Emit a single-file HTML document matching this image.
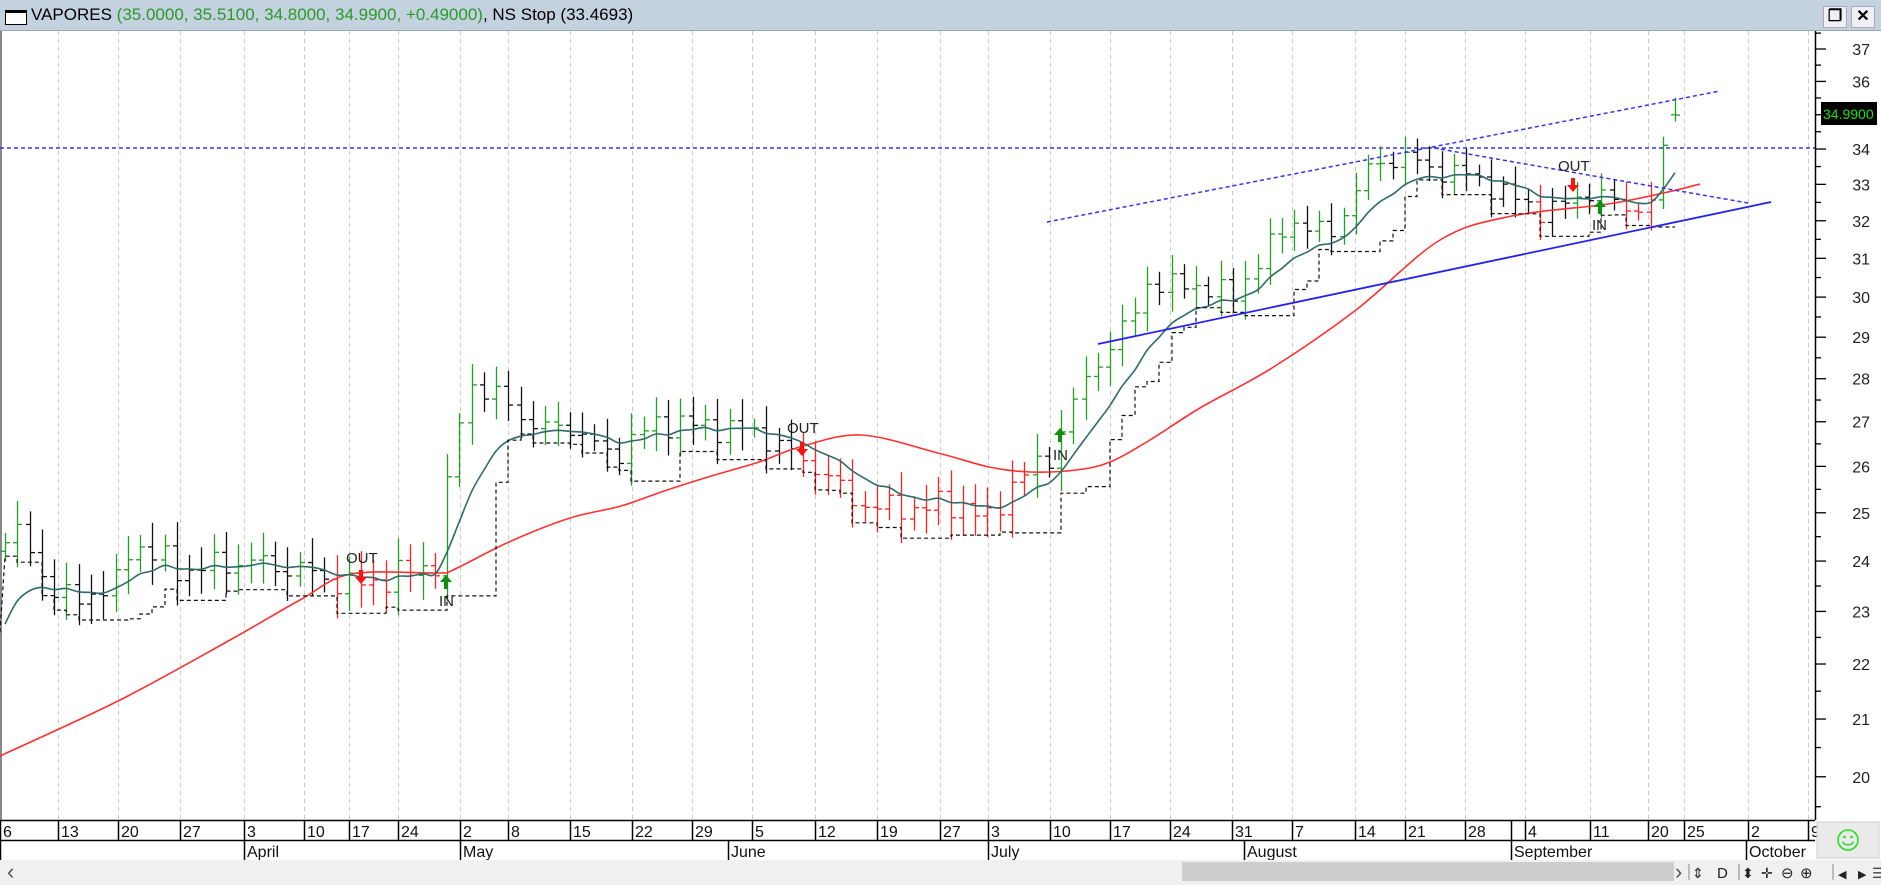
<!DOCTYPE html>
<html><head><meta charset="utf-8"><style>
html,body{margin:0;padding:0;width:1881px;height:885px;overflow:hidden;background:#fff;font-family:"Liberation Sans",sans-serif}
#title{position:absolute;left:0;top:0;width:1881px;height:31px;background:#c4d1de;border-bottom:1px solid #9aa7b4;box-sizing:border-box}
#title .t{position:absolute;left:31px;top:5px;font-size:17px;color:#000;white-space:nowrap}
#title .g{color:#2a9a2a}
#ico{position:absolute;left:5px;top:10px;width:22px;height:15px;border:1px solid #000;border-top:3px solid #000;box-sizing:border-box;background:#fff}
.btn{position:absolute;top:6px;width:24px;height:22px;background:#eef0f3;border:1px solid #aab;box-sizing:border-box;font-size:16px;text-align:center;line-height:20px;font-weight:bold}
svg{position:absolute;left:0;top:0}
</style></head><body>
<div id="title"><div id="ico"></div><div class="t">VAPORES <span class="g">(35.0000, 35.5100, 34.8000, 34.9900, +0.49000)</span>, NS Stop (33.4693)</div>
<div class="btn" style="left:1823px">&#x2750;</div><div class="btn" style="left:1851px">✕</div></div>
<svg id="s" width="1881" height="885" style="top:0"></svg>
<script>
var S=document.getElementById('s'),out='';
function Y(p){return 49+1183*(Math.log(37)-Math.log(p));}
function L(x1,y1,x2,y2,c,w,d){out+='<line x1="'+x1+'" y1="'+y1+'" x2="'+x2+'" y2="'+y2+'" stroke="'+c+'" stroke-width="'+(w||1)+'"'+(d?' stroke-dasharray="'+d+'"':'')+'/>';}
function T(x,y,t,c,s,a){out+='<text x="'+x+'" y="'+y+'" fill="'+(c||'#000')+'" font-size="'+(s||15)+'" font-family="Liberation Sans"'+(a?' text-anchor="'+a+'"':'')+'>'+t+'</text>';}
function cr(pts){var d='M'+pts[0][0]+','+pts[0][1];for(var i=0;i<pts.length-1;i++){var p0=pts[Math.max(0,i-1)],p1=pts[i],p2=pts[i+1],p3=pts[Math.min(pts.length-1,i+2)];d+=' C'+(p1[0]+(p2[0]-p0[0])/6).toFixed(1)+','+(p1[1]+(p2[1]-p0[1])/6).toFixed(1)+' '+(p2[0]-(p3[0]-p1[0])/6).toFixed(1)+','+(p2[1]-(p3[1]-p1[1])/6).toFixed(1)+' '+p2[0]+','+p2[1];}return d;}
out+='<rect x="0" y="31" width="1815" height="789" fill="#fff"/>';
L(1,31,1,820,'#888',2);
var ticks=[[0,'6'],[58,'13'],[118,'20'],[180,'27'],[244,'3'],[304,'10'],[349,'17'],[398,'24'],[460,'2'],[508,'8'],[570,'15'],[632,'22'],[692,'29'],[752,'5'],[815,'12'],[877,'19'],[940,'27'],[988,'3'],[1050,'10'],[1110,'17'],[1170,'24'],[1232,'31'],[1292,'7'],[1355,'14'],[1405,'21'],[1465,'28'],[1525,'4'],[1590,'11'],[1648,'20'],[1684,'25'],[1748,'2'],[1808,'9']];
ticks.forEach(function(t){if(t[0]>0)L(t[0]+.5,31,t[0]+.5,820,'#c8c8c8',1,'4,4');});
L(0,148,1815,148,'#3333ee',1.5,'4,3');
var kp=[[0,24.3],[20,24.6],[58,23.2],[118,23.5],[130,24.4],[180,23.8],[244,24.0],[304,23.8],[349,23.5],[398,23.7],[440,24.0],[452,26.5],[470,27.9],[508,27.4],[540,26.8],[570,26.9],[610,26.2],[632,26.6],[660,27.0],[700,26.9],[752,26.8],[790,26.3],[815,26.0],[850,25.3],[877,25.1],[920,25.1],[960,25.2],[988,24.8],[1010,25.6],[1050,26.2],[1070,27.3],[1100,28.5],[1135,29.6],[1145,30.4],[1160,30.3],[1200,30.3],[1232,30.0],[1260,31.0],[1292,32.0],[1330,31.6],[1370,33.5],[1405,33.8],[1430,33.4],[1465,33.3],[1500,32.8],[1545,32.2],[1590,32.8],[1630,32.3],[1655,32.5],[1665,34.3],[1676,34.99]];
function ip(x){for(var i=1;i<kp.length;i++)if(x<=kp[i][0]){var a=kp[i-1],b=kp[i];return a[1]+(b[1]-a[1])*(x-a[0])/(b[0]-a[0]);}return kp[kp.length-1][1];}
var rp=[[0,756],[120,700],[230,640],[300,600],[351,574],[438,573],[453,570],[509,542],[570,518],[621,506],[667,490],[708,477],[759,462],[800,447],[861,435],[938,453],[989,467],[1030,472],[1076,470],[1110,462],[1150,440],[1200,408],[1272,368],[1356,310],[1440,240],[1512,216],[1608,204],[1668,192],[1700,184]];
function rY(x){for(var i=1;i<rp.length;i++)if(x<=rp[i][0]){var a=rp[i-1],b=rp[i];return a[1]+(b[1]-a[1])*(x-a[0])/(b[0]-a[0]);}return 184;}
var bars=[],prev=24.2,ema=22.3,lows=[],stp=[],tl=[];
for(var i=0;i<=136;i++){var x=Math.round(5+i*12.28);var c=ip(x)+0.35*Math.sin(i*2.3)*Math.cos(i*0.7);var o=prev;var r=0.2+0.3*Math.abs(Math.sin(i*1.7));var h=Math.max(o,c)+r,l=Math.min(o,c)-r;if(i==136){o=35.0;c=34.99;h=35.51;l=34.8;}
bars.push([x,o,h,l,c]);prev=c;ema=ema+(c-ema)*0.22;tl.push([x,ema]);lows.push(l);var mn=Math.min.apply(null,lows.slice(-4));stp.push([x,mn+0.1]);}
bars.forEach(function(b,i){var x=b[0],col;var ry=rY(x);if(Y(b[4])>ry+2)col='#ff2020';else if(b[4]>tl[i][1]&&b[4]>=(i?bars[i-1][4]:0)-0.1)col='#22a022';else col='#111';
L(x+.5,Y(b[2]),x+.5,Y(b[3]),col,1.3);L(x-4,Y(b[1]),x+.5,Y(b[1]),col,1.3);L(x+.5,Y(b[4]),x+5,Y(b[4]),col,1.3);});
out+='<path d="'+cr(rp)+'" fill="none" stroke="#ff3030" stroke-width="1.6"/>';
out+='<path d="'+cr(tl.map(function(p){return [p[0],+Y(p[1]).toFixed(1)]}))+'" fill="none" stroke="#2f6b6b" stroke-width="1.6"/>';
var sd='M0,'+Y(22.6).toFixed(1);stp.forEach(function(p,i){var yy=Y(p[1]).toFixed(1);sd+=' L'+p[0]+','+(i?Y(stp[i-1][1]).toFixed(1):yy)+' L'+p[0]+','+yy;});
out+='<path d="'+sd+'" fill="none" stroke="#111" stroke-width="1.2" stroke-dasharray="4,3"/>';
L(1047,222,1720,91,'#3333ee',1.5,'4,3');
L(1434,148,1748,203,'#3333ee',1.5,'4,3');
L(1098,344,1771,202,'#2222ee',1.8);
function dn(x,y){out+='<path d="M'+(x-2)+','+(y-8)+' h4 v7 h4 l-6,7 l-6,-7 h4z" fill="#ff1010"/>';}
function up(x,y){out+='<path d="M'+(x-2)+','+(y+8)+' h4 v-7 h4 l-6,-7 l-6,7 h4z" fill="#109010"/>';}
T(346,563,'OUT','#222',15);dn(361,578);
T(439,606,'IN','#222',15);up(446,581);
T(787,433,'OUT','#222',15);dn(802,450);
T(1053,460,'IN','#222',15);up(1060,434);
T(1558,171,'OUT','#222',15);dn(1573,186);
T(1592,230,'IN','#222',15);up(1600,206);
out+='<rect x="1815" y="31" width="66" height="789" fill="#fff"/>';
L(1815.5,31,1815.5,820,'#000',1.5);
for(var p=19.5;p<=37.5;p+=0.5){var yy=Y(p);if(yy<33||yy>815)continue;var mj=(p%1==0);L(1815,yy,mj?1826:1821,yy,'#000',1.3);if(mj&&p!=35)T(1870,yy+6,p,'#222',16,'end');}
out+='<rect x="1821" y="102" width="56" height="23" fill="#000"/><text x="1823" y="119" fill="#19e019" font-size="14" font-family="Liberation Sans">34.9900</text>';
out+='<rect x="0" y="820" width="1815" height="40" fill="#fff"/>';
L(0,820.5,1815,820.5,'#000',1.5);L(0,840.5,1815,840.5,'#000',1.5);
ticks.forEach(function(t){L(t[0]+.5,820,t[0]+.5,840,'#000',1.5);T(t[0]+3,837,t[1],'#111',16);});
[[0,''],[244,'April'],[460,'May'],[728,'June'],[988,'July'],[1244,'August'],[1511,'September'],[1746,'October']].forEach(function(m){L(m[0]+.5,840,m[0]+.5,860,'#000',1.5);T(m[0]+3,857,m[1],'#111',16);});
L(1511.5,820,1511.5,840,'#000',1.5);
out+='<rect x="1817" y="822" width="62" height="36" fill="#eaeaea" stroke="#ccc"/>';
out+='<circle cx="1848" cy="840" r="10" fill="none" stroke="#22dd22" stroke-width="1.6"/><circle cx="1844.5" cy="837" r="1.3" fill="#22dd22"/><circle cx="1851.5" cy="837" r="1.3" fill="#22dd22"/><path d="M1842.5,842 q5.5,6 11,0" fill="none" stroke="#22dd22" stroke-width="1.5"/>';
out+='<rect x="0" y="860" width="1881" height="25" fill="#f0f0f0"/>';
out+='<rect x="1182" y="862" width="492" height="19" fill="#cdcdcd"/>';
T(7,879,'‹','#555',22);T(1675,879,'›','#555',22);
L(1689,864,1689,880,'#888');L(1739,864,1739,880,'#888');L(1833,864,1833,880,'#888');
T(1692,878,'⇕','#222',14);T(1717,878,'D','#222',15);T(1742,878,'⬍','#222',14);T(1761,878,'✛','#222',14);T(1781,878,'⊖','#222',15);T(1800,878,'⊕','#222',15);
T(1838,878,'◀','#222',11);T(1858,878,'▶','#222',11);T(1872,878,'☰','#444',14);
S.innerHTML=out;
</script>
</body></html>
